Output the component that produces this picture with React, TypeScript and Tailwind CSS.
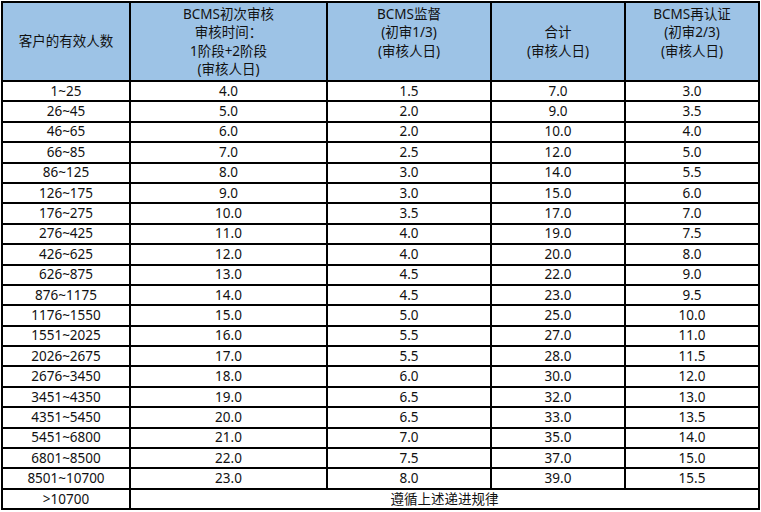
import React from 'react';

const rows: string[][] = [
  ['1~25', '4.0', '1.5', '7.0', '3.0'],
  ['26~45', '5.0', '2.0', '9.0', '3.5'],
  ['46~65', '6.0', '2.0', '10.0', '4.0'],
  ['66~85', '7.0', '2.5', '12.0', '5.0'],
  ['86~125', '8.0', '3.0', '14.0', '5.5'],
  ['126~175', '9.0', '3.0', '15.0', '6.0'],
  ['176~275', '10.0', '3.5', '17.0', '7.0'],
  ['276~425', '11.0', '4.0', '19.0', '7.5'],
  ['426~625', '12.0', '4.0', '20.0', '8.0'],
  ['626~875', '13.0', '4.5', '22.0', '9.0'],
  ['876~1175', '14.0', '4.5', '23.0', '9.5'],
  ['1176~1550', '15.0', '5.0', '25.0', '10.0'],
  ['1551~2025', '16.0', '5.5', '27.0', '11.0'],
  ['2026~2675', '17.0', '5.5', '28.0', '11.5'],
  ['2676~3450', '18.0', '6.0', '30.0', '12.0'],
  ['3451~4350', '19.0', '6.5', '32.0', '13.0'],
  ['4351~5450', '20.0', '6.5', '33.0', '13.5'],
  ['5451~6800', '21.0', '7.0', '35.0', '14.0'],
  ['6801~8500', '22.0', '7.5', '37.0', '15.0'],
  ['8501~10700', '23.0', '8.0', '39.0', '15.5'],
];

const th = 'border-2 border-black bg-[#9dc3e6] font-normal p-0 align-middle text-center';
const td = 'border-2 border-black p-0 h-[20.4px] text-center leading-[17px]';

// blank strings keep the empty lines the original cells have
function Head({ lines }: { lines: string[] }) {
  return (
    <div className="flex flex-col items-center">
      {lines.map((l, i) => (
        <div key={i} className="h-[18.4px] leading-[18.4px] whitespace-nowrap">{l}</div>
      ))}
    </div>
  );
}

export default function App() {
  return (
    <div className="w-[761px] h-[512px] bg-white pt-px pl-px text-[#111] text-[13.5px] font-['Noto_Sans','Noto_Sans_CJK_SC',sans-serif]">
      <table className="table-fixed border-collapse w-[757px]">
        <colgroup>
          <col className="w-[128px]" />
          <col className="w-[197px]" />
          <col className="w-[164px]" />
          <col className="w-[134px]" />
          <col className="w-[134px]" />
        </colgroup>
        <thead>
          <tr className="h-[79px]">
            <th className={th}><Head lines={['客户的有效人数']} /></th>
            <th className={th}>
              <Head lines={['BCMS初次审核', '审核时间：', '1阶段+2阶段', '(审核人日)']} />
            </th>
            <th className={th}>
              <Head lines={['BCMS监督', '(初审1/3)', '(审核人日)', '']} />
            </th>
            <th className={th}>
              <Head lines={['', '合计', '(审核人日)', '']} />
            </th>
            <th className={th}>
              <Head lines={['BCMS再认证', '(初审2/3)', '(审核人日)', '']} />
            </th>
          </tr>
        </thead>
        <tbody>
          {rows.map((r) => (
            <tr key={r[0]}>
              {r.map((c, i) => (
                <td key={i} className={td}>{c}</td>
              ))}
            </tr>
          ))}
          <tr>
            <td className={td}>&gt;10700</td>
            <td className={td} colSpan={4}>遵循上述递进规律</td>
          </tr>
        </tbody>
      </table>
    </div>
  );
}
